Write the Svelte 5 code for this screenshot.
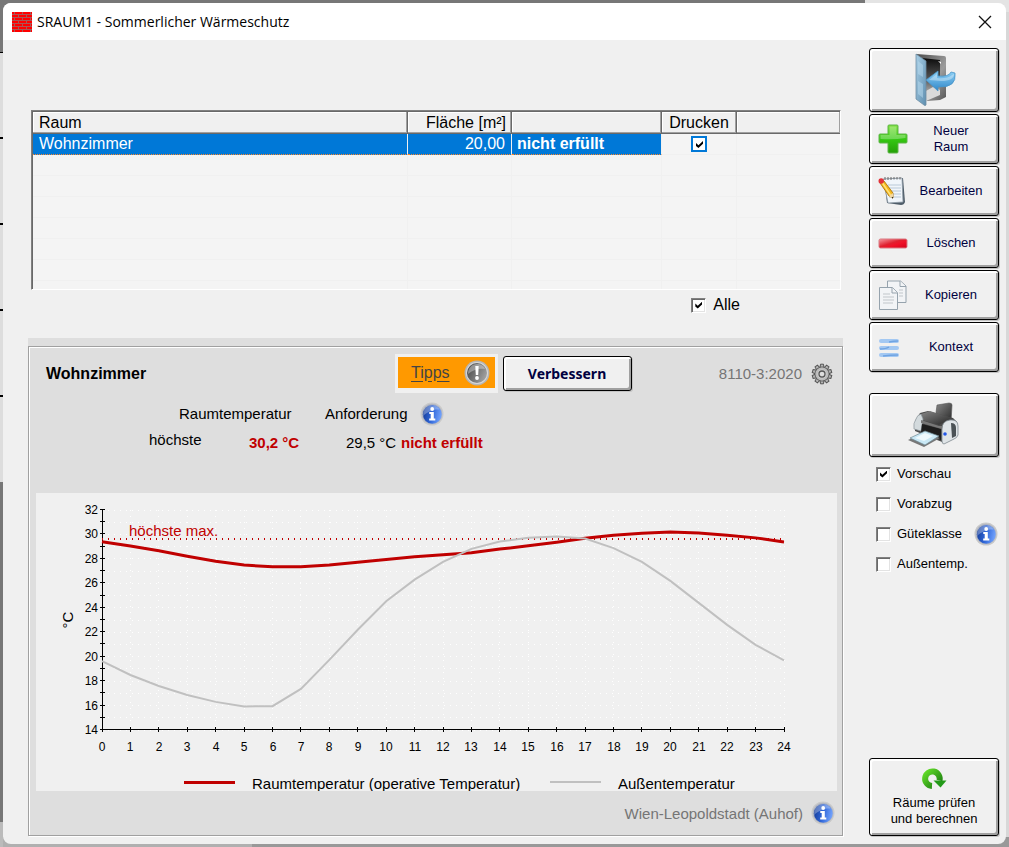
<script lang="ts">
  interface Room {
    name: string;
    area: string;
    result: string;
    print: boolean;
  }

  let rooms = $state<Room[]>([
    { name: 'Wohnzimmer', area: '20,00', result: 'nicht erfüllt', print: true },
  ]);
  let printAll = $state(true);

  let printOptions = $state([
    { id: 'vorschau', label: 'Vorschau', checked: true, info: false },
    { id: 'vorabzug', label: 'Vorabzug', checked: false, info: false },
    { id: 'gueteklasse', label: 'Güteklasse', checked: false, info: true },
    { id: 'aussentemp', label: 'Außentemp.', checked: false, info: false },
  ]);

  const emptyRows = [1, 2, 3, 4, 5, 6, 7];

  // Hourly values in °C, index = hour of day
  const roomTemp = [
    29.4, 29.05, 28.66, 28.22, 27.81, 27.5, 27.35, 27.35, 27.5, 27.73, 27.95, 28.17, 28.33,
    28.5, 28.8, 29.07, 29.36, 29.69, 29.94, 30.1, 30.21, 30.12, 29.94, 29.72, 29.38,
  ];
  const outsideTemp = [
    19.63, 18.5, 17.6, 16.87, 16.3, 15.93, 15.95, 17.36, 19.74, 22.2, 24.54, 26.3, 27.76,
    28.82, 29.42, 29.72, 29.83, 29.67, 28.88, 27.76, 26.2, 24.4, 22.6, 20.97, 19.7,
  ];
  const limit = 29.6;

  const plot = { left: 66, right: 748, top: 17, bottom: 237, min: 14, max: 32 };
  const hours = Array.from({ length: 25 }, (_, i) => i);
  const degrees = Array.from({ length: plot.max - plot.min + 1 }, (_, i) => plot.min + i);

  function px(hour: number): number {
    return plot.left + ((plot.right - plot.left) * hour) / 24;
  }

  function py(temp: number): number {
    return plot.bottom - ((plot.bottom - plot.top) * (temp - plot.min)) / (plot.max - plot.min);
  }

  function line(values: number[]): string {
    return values.map((v, i) => `${px(i)},${py(v)}`).join(' ');
  }

  function toggleAll() {
    rooms.forEach((room) => (room.print = printAll));
  }
</script>

{#snippet infoIcon()}
  <svg width="24" height="24" viewBox="0 0 24 24" aria-hidden="true">
    <circle cx="12" cy="12" r="11.5" fill="#c9c9c9" />
    <circle cx="12" cy="12" r="10.3" fill="#aeb4c2" />
    <circle cx="12.3" cy="12.3" r="9.4" fill="url(#info-blue)" />
    <path d="M3 14C3 8 6 3.500 12 3.200c4 0 6.500 2 7.500 4.300C13 7 8 9.500 3 14z" fill="#fff" opacity=".3" />
    <circle cx="12.200" cy="7" r="1.900" fill="#fff" />
    <path d="M9.300 10h4.500v6.600h1.500v1.900H9.200v-1.900h1.500v-4.700H9.300z" fill="#fff" />
  </svg>
{/snippet}

<svg class="defs" width="0" height="0" aria-hidden="true">
  <defs>
    <linearGradient id="info-blue" x1="0" y1="0.500" x2="1" y2="0.700">
      <stop offset="0" stop-color="#173f9c" />
      <stop offset=".45" stop-color="#2f66d8" />
      <stop offset="1" stop-color="#79a8ff" />
    </linearGradient>
    <linearGradient id="grey-ball" x1="0" y1="0.300" x2="1" y2="0.800">
      <stop offset="0" stop-color="#4c4c4c" />
      <stop offset="1" stop-color="#a8a8a8" />
    </linearGradient>
    <linearGradient id="door" x1="0" y1="0" x2="1" y2="1">
      <stop offset="0" stop-color="#a9cfe6" />
      <stop offset="1" stop-color="#5f8fb0" />
    </linearGradient>
    <linearGradient id="frame" x1="0" y1="0" x2="1" y2="1">
      <stop offset="0" stop-color="#4a4a4a" />
      <stop offset=".6" stop-color="#9c9c9c" />
      <stop offset="1" stop-color="#565656" />
    </linearGradient>
    <linearGradient id="hole" x1="0" y1="0" x2="0" y2="1">
      <stop offset="0" stop-color="#0c0c0c" />
      <stop offset=".5" stop-color="#555" />
      <stop offset="1" stop-color="#ddd" />
    </linearGradient>
    <linearGradient id="arrow" x1="0" y1="0" x2="0" y2="1">
      <stop offset="0" stop-color="#8fd2f7" />
      <stop offset="1" stop-color="#2f86c8" />
    </linearGradient>
    <linearGradient id="green" x1="0" y1="0" x2="0" y2="1">
      <stop offset="0" stop-color="#7fe03c" />
      <stop offset=".5" stop-color="#35c812" />
      <stop offset="1" stop-color="#25a008" />
    </linearGradient>
    <linearGradient id="red" x1="0" y1="0" x2="1" y2="1">
      <stop offset="0" stop-color="#f79aa2" />
      <stop offset=".45" stop-color="#e0202f" />
      <stop offset=".6" stop-color="#f01228" />
      <stop offset="1" stop-color="#d5001a" />
    </linearGradient>
    <linearGradient id="printer-dark" x1="0" y1="0" x2="1" y2="1">
      <stop offset="0" stop-color="#8a8a8a" />
      <stop offset="1" stop-color="#262626" />
    </linearGradient>
    <linearGradient id="refresh" x1="0" y1="0" x2="1" y2="1">
      <stop offset="0" stop-color="#62dc28" />
      <stop offset="1" stop-color="#1c7d12" />
    </linearGradient>
    <pattern id="bricks" width="8" height="6" patternUnits="userSpaceOnUse">
      <rect width="8" height="6" fill="#f00" />
      <path d="M0 2.500h8M0 5.500h8M2.500 0v3M6.500 3v3" stroke="#a55" stroke-width="1" />
    </pattern>
  </defs>
</svg>

<div class="desktop">
  <section class="window" aria-label="Sommerlicher Wärmeschutz">
    <header class="titlebar">
      <svg width="20" height="20" viewBox="0 0 20 20" aria-hidden="true">
        <rect width="20" height="20" fill="url(#bricks)" />
      </svg>
      <h1>SRAUM1 - Sommerlicher Wärmeschutz</h1>
      <button class="close" aria-label="Schließen">
        <svg width="14" height="14" viewBox="0 0 14 14" aria-hidden="true">
          <path d="M1 1l12 12M13 1L1 13" stroke="#111" stroke-width="1.300" />
        </svg>
      </button>
    </header>

    <div class="body">
      <main>
        <div class="list">
          <table>
            <colgroup>
              <col class="col-room" />
              <col class="col-area" />
              <col class="col-result" />
              <col class="col-print" />
              <col />
            </colgroup>
            <thead>
              <tr>
                <th>Raum</th>
                <th class="right">Fläche [m²]</th>
                <th></th>
                <th class="center">Drucken</th>
                <th></th>
              </tr>
            </thead>
            <tbody>
              {#each rooms as room (room.name)}
                <tr>
                  <td class="selected">{room.name}</td>
                  <td class="selected right">{room.area}</td>
                  <td class="selected strong">{room.result}</td>
                  <td class="center">
                    <input
                      class="focused"
                      type="checkbox"
                      aria-label={`${room.name} drucken`}
                      bind:checked={room.print}
                    />
                  </td>
                  <td></td>
                </tr>
              {/each}
              {#each emptyRows as row (row)}
                <tr><td></td><td></td><td></td><td></td><td></td></tr>
              {/each}
            </tbody>
          </table>
        </div>

        <label class="all">
          <input type="checkbox" bind:checked={printAll} onchange={toggleAll} />
          Alle
        </label>

        <div class="result">
          <section class="panel">
            <div class="panel-head">
              <h2>Wohnzimmer</h2>
              <div class="tips">
                <a href="#tipps">Tipps</a>
                <svg width="26" height="26" viewBox="0 0 26 26" aria-hidden="true">
                  <circle cx="13" cy="13" r="12.500" fill="#b5b5b5" />
                  <circle cx="13" cy="13" r="11" fill="#d8d8d8" />
                  <circle cx="13" cy="13" r="10" fill="url(#grey-ball)" />
                  <path d="M4 14C4 8 8 4 13 4c4 0 7 2 8 5-7-1-12 1-17 5z" fill="#fff" opacity=".35" />
                  <path d="M11.300 6h3.400l-.5 9h-2.400z" fill="#fff" />
                  <circle cx="13" cy="18" r="1.900" fill="#fff" />
                </svg>
              </div>
              <button class="push improve">Verbessern</button>
              <div class="norm">
                <span>8110-3:2020</span>
                <svg width="22" height="22" viewBox="-11 -11 22 22" aria-hidden="true">
                  <g fill="#b4b4b4" stroke="#555" stroke-width="1">
                    {#each [0, 36, 72, 108, 144, 180, 216, 252, 288, 324] as angle (angle)}
                      <path d="M-2-6L-1.500-9.800h3L2-6z" transform={`rotate(${angle})`} />
                    {/each}
                    <circle r="7" />
                  </g>
                  <circle r="6.500" fill="#bcbcbc" />
                  <circle r="4.500" fill="#d0d0d0" />
                  <circle r="3" fill="#dedede" stroke="#555" stroke-width="1.300" />
                </svg>
              </div>
            </div>

            <div class="summary summary-head">
              <span class="temp-head">Raumtemperatur</span>
              <span class="limit-head">Anforderung</span>
              {@render infoIcon()}
            </div>
            <div class="summary summary-values">
              <span class="row-name">höchste</span>
              <strong class="temp-value">30,2 °C</strong>
              <span class="limit-value">29,5 °C</span>
              <strong>nicht erfüllt</strong>
            </div>

            <svg class="chart" viewBox="0 0 801 298" role="img" aria-label="Temperaturverlauf">
              <g class="grid">
                {#each degrees as degree (degree)}
                  <line x1={plot.left} x2={plot.right} y1={Math.floor(py(degree)) + 0.5} y2={Math.floor(py(degree)) + 0.5} />
                {/each}
                {#each hours as hour (hour)}
                  <line y1={plot.top} y2={plot.bottom} x1={Math.floor(px(hour)) + 0.5} x2={Math.floor(px(hour)) + 0.5} />
                {/each}
              </g>

              <g class="axis">
                <path d={`M${plot.left + 0.5} ${plot.top - 1}V${plot.bottom - 0.5}H${plot.right + 1}`} />
                {#each degrees as degree (degree)}
                  <path d={`M${plot.left - 2} ${Math.round(py(degree)) - 0.5}h5`} />
                {/each}
                {#each hours as hour (hour)}
                  <path d={`M${Math.floor(px(hour)) + 0.5} ${plot.bottom - 3}v5`} />
                {/each}
              </g>

              <g class="ticks">
                {#each degrees.filter((d) => d % 2 === 0) as degree (degree)}
                  <text x="62" y={Math.round(py(degree)) + 4} text-anchor="end">{degree}</text>
                {/each}
                {#each hours as hour (hour)}
                  <text x={Math.round(px(hour))} y="258" text-anchor="middle">{hour}</text>
                {/each}
              </g>

              <text class="unit" transform="translate(37 127) rotate(-90)" text-anchor="middle">°C</text>

              <line class="limit" x1={plot.left} x2={plot.right} y1={Math.round(py(limit))} y2={Math.round(py(limit))} />
              <text class="limit-label" x="93" y="43">höchste max.</text>

              <polyline class="room-line" points={line(roomTemp)} />
              <polyline class="outside-line" points={line(outsideTemp)} />

              <path class="room-line" d="M148 289.500h51" />
              <text class="legend" x="216" y="296">Raumtemperatur (operative Temperatur)</text>
              <path class="outside-line" d="M514 289h51" />
              <text class="legend" x="582" y="296">Außentemperatur</text>
            </svg>

            <footer>
              <span>Wien-Leopoldstadt (Auhof)</span>
              {@render infoIcon()}
            </footer>
          </section>
        </div>
      </main>

      <aside>
        <button class="push tall" aria-label="Beenden">
          <svg width="44" height="54" viewBox="0 0 44 54" aria-hidden="true">
            <path d="M4 1l28 2q2 0 2 2v39l-6 3-13 1z" fill="url(#frame)" />
            <path d="M10 5l18 2v34l-14 6z" fill="url(#hole)" />
            <path d="M14 38l7-4 7 3v5l-14 6z" fill="#d9d9d9" />
            <path d="M4 1l10 7v44q-1 1-2 0L4 46z" fill="url(#door)" stroke="#6f8ea3" stroke-width=".8" />
            <path d="M6 8l5 4v12l-5-3zM6 28l5 3v14l-5-4z" fill="#b9dcf0" opacity=".5" />
            <path d="M26 8l3 1v2z" fill="#fff" />
            <path d="M14 27L26 18v5q11 1 13-4l4 1q2 15-17 14v4z" fill="url(#arrow)" stroke="#4b95c8" stroke-width=".8" />
            <path d="M17 27l8-6v4q10 1 15-3l2-1q0 7-13 7z" fill="#fff" opacity=".35" />
          </svg>
        </button>

        <button class="push with-icon">
          <svg width="30" height="30" viewBox="0 0 30 30" aria-hidden="true">
            <path d="M11 1h8q1 0 1 1v8h8q1 0 1 1v7q0 1-1 1h-8v9q0 1-1 1h-8q-1 0-1-1v-9H2q-1 0-1-1v-7q0-1 1-1h8V2q0-1 1-1z" fill="url(#green)" stroke="#5fb548" stroke-width="1" />
            <path d="M11.500 2.500h7v8.500h9v3q-12 2-25 1v-4h9z" fill="#fff" opacity=".28" />
          </svg>
          <span>Neuer<br />Raum</span>
        </button>

        <button class="push with-icon">
          <svg width="30" height="30" viewBox="0 0 30 30" aria-hidden="true">
            <path d="M6 3l19-1 2 24q-1 3-4 3l-14-2z" fill="#4f5d69" />
            <path d="M5 3l19-1 1 24-15 1z" fill="#f0f5fa" stroke="#8b98a3" stroke-width=".8" />
            <path d="M10 9h13M10 12h13M10 15h13M11 18h12M11 21h12" stroke="#b9c9d8" />
            <path d="M7 4V1M10 4V1M13 4V1M16 3.500V1M19 3.500V1M22 3.500V1" stroke="#666" />
            <path d="M2 7l4-2 9 12 0 5-4-2z" fill="#f5b81c" stroke="#a36a00" stroke-width=".8" />
            <path d="M4.500 7l8 12" stroke="#ffe27a" stroke-width="1.500" />
            <path d="M11 20l4-3 0 6z" fill="#f3d9a5" />
            <path d="M13.500 21.500l1.500-.7v2z" fill="#222" />
            <circle cx="3.200" cy="5" r="2.700" fill="#e2333a" />
          </svg>
          <span>Bearbeiten</span>
        </button>

        <button class="push with-icon">
          <svg width="30" height="30" viewBox="0 0 30 30" aria-hidden="true">
            <rect x="1" y="11" width="28" height="9" rx="1.500" fill="url(#red)" stroke="#d87a82" stroke-width="1" />
          </svg>
          <span>Löschen</span>
        </button>

        <button class="push with-icon">
          <svg width="30" height="30" viewBox="0 0 30 30" aria-hidden="true">
            <g fill="#f2f4f6" stroke="#96a3ad" stroke-width="1">
              <path d="M9.500 1h13l5.500 5v16.500H9.500z" />
              <path d="M22 1v5.500h6" />
              <path d="M1.500 7.500h13l5 5v17h-18z" />
              <path d="M14 7.500V13h5.500" />
            </g>
            <path d="M5 14h7M5 17h11M5 20h11M5 23h10M21 10h4M21 13h4M21 16h4" stroke="#c1c6ca" />
          </svg>
          <span>Kopieren</span>
        </button>

        <button class="push with-icon">
          <svg width="30" height="30" viewBox="0 0 30 30" aria-hidden="true">
            <g fill="#a3c8f2">
              <rect x="1" y="7" width="20" height="4" rx="2" />
              <rect x="1" y="14" width="20" height="4" rx="2" />
              <rect x="1" y="21" width="20" height="4" rx="2" />
            </g>
            <path d="M11 10q5-1 9-1M2 17q6 0 9-2M5 24q7-1 15-1" fill="none" stroke="#6fa3e2" stroke-width="1.500" />
          </svg>
          <span>Kontext</span>
        </button>

        <button class="push tall print" aria-label="Drucken">
          <svg width="54" height="46" viewBox="0 0 54 46" aria-hidden="true">
            <path d="M30 3l12-2q3 0 3 2l-1 17-16-2z" fill="url(#printer-dark)" stroke="#555" stroke-width=".6" />
            <path d="M13 11l8-2 25 7 4 4v12l-12 9-8-3-22-9 0-10z" fill="#4a4a4a" />
            <path d="M14 12l9-3 21 7-12 7-20-6z" fill="url(#printer-dark)" />
            <path d="M9 17q1-4 5-5l2 5-2 12-7-2q-1-6 2-10z" fill="#d3dadd" stroke="#8c969c" stroke-width=".7" />
            <path d="M35 27q0-8 8-9 8-1 8 6v9q-1 3-4 4l-10 5q-2 0-2-3z" fill="#dfe4e7" stroke="#7f898f" stroke-width=".8" />
            <path d="M44 21q5 0 5 5v8l-4 2z" fill="#4b5256" />
            <path d="M15 22l19 5v11l-20-7z" fill="#1d1d1d" />
            <path d="M14 18l18 6 3 0v3l-21-6z" fill="#777" />
            <path d="M1 38l17-8 15 6-16 9z" fill="#777" />
            <path d="M3 36l15-7 14 5-14 9z" fill="#c9e8f5" stroke="#6f8791" stroke-width=".7" />
            <path d="M8 36l10-5 8 3-9 5z" fill="#eef9fd" />
            <circle cx="38" cy="32" r="1.800" fill="#2458e8" />
          </svg>
        </button>

        <div class="options">
          {#each printOptions as option (option.id)}
            <div class="option">
              <label>
                <input type="checkbox" bind:checked={option.checked} />
                {option.label}
              </label>
              {#if option.info}
                {@render infoIcon()}
              {/if}
            </div>
          {/each}
        </div>

        <button class="push check">
          <svg width="26" height="24" viewBox="0 0 26 24" aria-hidden="true">
            <path d="M11 19A7.300 7.300 0 1 1 18.500 13.500" fill="none" stroke="url(#refresh)" stroke-width="6" />
            <path d="M12.500 13.500h13l-6 7z" fill="#239a18" />
          </svg>
          <span>Räume prüfen<br />und berechnen</span>
        </button>
      </aside>
    </div>
  </section>
</div>

<style>
  :global(body) {
    margin: 0;
  }

  .defs {
    display: block;
  }

  .desktop {
    box-sizing: border-box;
    min-height: 100vh;
    display: flex;
    padding: 3px;
    background:
      linear-gradient(#777 52px, #000 52px 53px, #ddd 53px 137px, #000 137px 139px, #ddd 139px 223px, #000 223px 225px, #ddd 225px 309px, #000 309px 311px, #ddd 311px 395px, #000 395px 397px, #ddd 397px 482px, #777 482px 822px, #bbb 822px) 0 0 / 3px 100% no-repeat,
      linear-gradient(90deg, #777 865px, #e4e4e4 865px) 0 0 / 100% 12px no-repeat,
      linear-gradient(90deg, #b0b0b0 25%, #999 25%) 0 100% / 100% 10px no-repeat,
      #d8d8d8;
    font-family: 'Liberation Sans', Arial, sans-serif;
    color: #000;
  }

  .window {
    flex: 1;
    display: flex;
    flex-direction: column;
    min-width: 0;
    overflow: hidden;
    border-radius: 8px;
    background: #f0f0f0;
  }

  .titlebar {
    display: flex;
    align-items: center;
    gap: 5px;
    height: 37px;
    padding: 0 14px 0 9px;
    background: #fff;
  }

  h1 {
    flex: 1;
    margin: 0;
    font: 400 14px/20px 'Open Sans', 'Noto Sans', sans-serif;
  }

  .close {
    display: flex;
    padding: 0;
    border: 0;
    background: none;
  }

  .body {
    flex: 1;
    display: flex;
    gap: 26px;
    padding: 8px 7px 8px 25px;
  }

  main {
    flex: 1;
    display: flex;
    flex-direction: column;
    min-width: 0;
    padding-top: 62px;
  }

  .list {
    box-sizing: border-box;
    height: 180px;
    margin: 0 2px 0 3px;
    padding: 1px 0 0 1px;
    overflow: hidden;
    border: 1px solid #808080;
    border-right-color: #fff;
    border-bottom-color: #fff;
    background: #f4f4f4;
    box-shadow: inset 1px 1px #696969;
  }

  table {
    width: 100%;
    table-layout: fixed;
    border-collapse: separate;
    border-spacing: 0;
    font-size: 16px;
    line-height: 20px;
  }

  .col-room {
    width: 375px;
  }

  .col-area {
    width: 104px;
  }

  .col-result {
    width: 150px;
  }

  .col-print {
    width: 75px;
  }

  th {
    height: 22px;
    box-sizing: border-box;
    padding: 1px 5px 0 6px;
    border-right: 1px solid #696969;
    border-bottom: 1px solid #696969;
    background: #f0f0f0;
    box-shadow: inset -1px -1px #a0a0a0, inset 1px 1px #fff;
    font-weight: 400;
    text-align: left;
  }

  th:last-child,
  td:last-child {
    border-right: 0;
  }

  td {
    height: 21px;
    box-sizing: border-box;
    padding: 0 6px;
    border-right: 1px solid #f0f0f0;
    border-bottom: 1px solid #f0f0f0;
  }

  .right {
    text-align: right;
  }

  .center {
    padding: 0;
    text-align: center;
  }

  .selected {
    border-bottom: 1px dotted #ff8728;
    background: #0078d7;
    color: #fff;
  }

  .strong {
    padding-left: 5px;
    font-weight: 700;
  }

  input {
    flex: none;
    width: 15px;
    height: 15px;
    margin: 0;
    box-sizing: border-box;
    appearance: none;
    border: 1px solid #808080;
    border-right-color: #fff;
    border-bottom-color: #fff;
    background: #fff;
    box-shadow: inset 1px 1px #696969, inset -1px -1px #e3e3e3;
  }

  input:checked::before {
    content: '';
    display: block;
    width: 7px;
    height: 7px;
    margin: 3px;
    background: #000;
    clip-path: polygon(0 30%, 35% 62%, 100% 0, 100% 40%, 35% 100%, 0 70%);
  }

  input.focused {
    display: block;
    width: 16px;
    height: 16px;
    margin: 0 auto;
    border: 2px solid #0078d7;
    box-shadow: none;
  }

  .all {
    display: flex;
    align-items: center;
    align-self: flex-end;
    gap: 7px;
    height: 30px;
    margin: 0 103px 18px 0;
    font-size: 16px;
  }

  .result {
    flex: 1;
    display: flex;
    padding-top: 8px;
    background: #dedede;
  }

  .panel {
    flex: 1;
    display: flex;
    flex-direction: column;
    min-width: 0;
    border: 1px solid #a0a0a0;
    box-shadow: inset 1px 1px #fff, 1px 1px #fff;
  }

  .panel-head {
    display: flex;
    align-items: center;
    height: 39px;
    margin: 7px 9px 0 17px;
  }

  h2 {
    flex: 0 0 349px;
    margin: 0;
    font-size: 16px;
    line-height: 20px;
  }

  .tips {
    display: flex;
    align-items: center;
    gap: 14px;
    height: 31px;
    padding: 0 5px 0 13px;
    border: 3px solid #f0f0f0;
    border-width: 3px 3px 5px;
    background: #f90;
  }

  .tips a {
    color: #444;
    font-size: 16px;
    text-underline-offset: 3px;
  }

  .push {
    display: flex;
    align-items: center;
    justify-content: center;
    box-sizing: border-box;
    padding: 0;
    border: 1px solid #000;
    border-radius: 3px;
    background: #f0f0f0;
    box-shadow: inset 2px 2px #fff, inset -2px -2px #a0a0a0, 1px 1px #c4c4c4;
    color: #000040;
    font: 400 13px/16px 'Liberation Sans', Arial, sans-serif;
  }

  .improve {
    width: 129px;
    height: 35px;
    margin-left: 5px;
    font: 700 14px/20px 'Noto Sans', sans-serif;
  }

  .norm {
    display: flex;
    align-items: center;
    gap: 9px;
    margin-left: auto;
    color: #757575;
    font-size: 15px;
  }

  .summary {
    display: flex;
    align-items: center;
    font-size: 15px;
    line-height: 20px;
  }

  .summary-head {
    height: 24px;
    margin: 9px 0 0 150px;
  }

  .temp-head {
    width: 146px;
  }

  .limit-head {
    width: 95px;
  }

  .summary-values {
    height: 26px;
    margin: 4px 0 37px 120px;
  }

  .row-name {
    align-self: flex-start;
    width: 100px;
  }

  .temp-value {
    width: 97px;
  }

  .limit-value {
    width: 55px;
  }

  .summary strong {
    color: #c00000;
  }

  .chart {
    display: block;
    margin: 0 5px 0 7px;
    background: #f0f0f0;
  }

  .grid line {
    stroke: #fff;
    stroke-dasharray: 1 5;
  }

  .axis path {
    fill: none;
    stroke: #000;
  }

  .ticks text {
    font-size: 12px;
  }

  .unit,
  .limit-label,
  .legend {
    font-size: 15px;
  }

  .limit {
    stroke: #c00000;
    stroke-width: 2;
    stroke-dasharray: 1 5;
  }

  .limit-label {
    fill: #c00000;
  }

  .room-line {
    fill: none;
    stroke: #c00000;
    stroke-width: 3;
  }

  .outside-line {
    fill: none;
    stroke: #c0c0c0;
    stroke-width: 2;
  }

  footer {
    flex: 1;
    display: flex;
    align-items: center;
    justify-content: flex-end;
    gap: 8px;
    min-height: 44px;
    padding-right: 7px;
    color: #757575;
    font-size: 15px;
  }

  aside {
    flex: 0 0 130px;
    display: flex;
    flex-direction: column;
    gap: 2px;
  }

  aside .push {
    flex: none;
    height: 50px;
  }

  aside .tall {
    height: 64px;
  }

  .with-icon {
    justify-content: flex-start;
    padding: 0 8px;
  }

  .with-icon span {
    flex: 1;
    margin-left: 4px;
  }

  .print {
    margin-top: 19px;
  }

  .options {
    font-size: 13px;
    line-height: 16px;
  }

  .option {
    display: flex;
    align-items: center;
    justify-content: space-between;
    height: 30px;
    padding: 0 1px 0 7px;
  }

  .option label {
    display: flex;
    align-items: center;
    gap: 6px;
  }

  aside .check {
    flex-direction: column;
    gap: 4px;
    height: 78px;
    margin-top: auto;
    color: #000;
  }
</style>
